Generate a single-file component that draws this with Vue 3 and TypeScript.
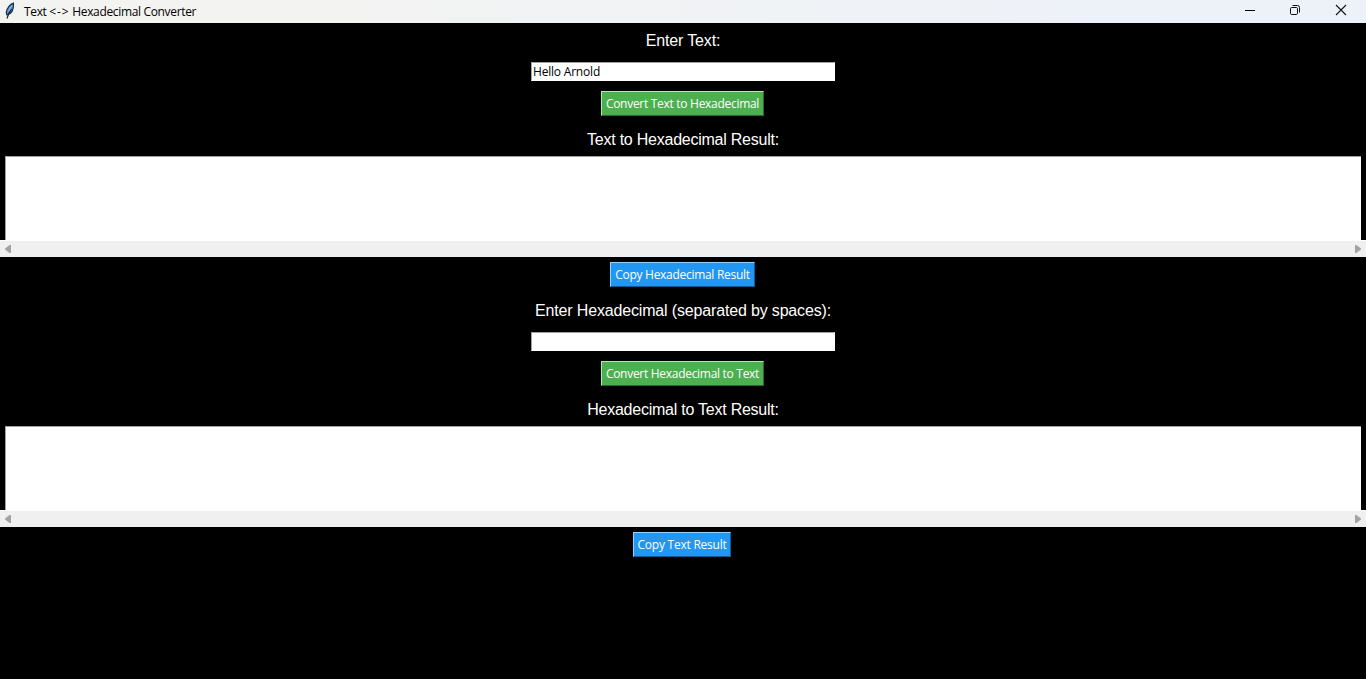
<script setup lang="ts">
import { reactive } from 'vue'

interface Converter {
  id: string
  prompt: string
  value: string
  action: string
  heading: string
  result: string
  copy: string
  run: (input: string) => string
}

const toHex = (input: string): string =>
  Array.from(new TextEncoder().encode(input), (b) => b.toString(16).padStart(2, '0')).join(' ')

const fromHex = (input: string): string => {
  const bytes = input.trim().split(/\s+/).filter(Boolean).map((h) => parseInt(h, 16))
  return new TextDecoder().decode(new Uint8Array(bytes))
}

const converters = reactive<Converter[]>([
  {
    id: 'encode',
    prompt: 'Enter Text:',
    value: 'Hello Arnold',
    action: 'Convert Text to Hexadecimal',
    heading: 'Text to Hexadecimal Result:',
    result: '',
    copy: 'Copy Hexadecimal Result',
    run: toHex,
  },
  {
    id: 'decode',
    prompt: 'Enter Hexadecimal (separated by spaces):',
    value: '',
    action: 'Convert Hexadecimal to Text',
    heading: 'Hexadecimal to Text Result:',
    result: '',
    copy: 'Copy Text Result',
    run: fromHex,
  },
])

const copyResult = (text: string) => navigator.clipboard?.writeText(text)
</script>

<template>
  <div class="window">
    <header class="titlebar">
      <svg class="feather" width="12" height="18" viewBox="0 0 12 18">
        <path d="M9.5 1.2C6 2.2 2.8 6 2.2 10.5L3 13C7 12 9.8 8 9.5 1.2Z" fill="#4f93e6" stroke="#222c38" stroke-width="1.2" />
        <path d="M7.8 3.5L4.6 9.5" stroke="#7db6f7" stroke-width="1.4" />
        <path d="M7.6 7L5 11L3 16.5" stroke="#15191f" stroke-width="1.1" fill="none" />
      </svg>
      <span class="title">Text <span class="arrows">&lt;-&gt;</span> Hexadecimal Converter</span>
      <div class="controls">
        <svg width="46" height="22" viewBox="0 0 46 22"><path d="M17 10.5H27" stroke="#000" /></svg>
        <svg width="46" height="22" viewBox="0 0 46 22" fill="none" stroke="#111">
          <rect x="16.5" y="7.5" width="7" height="7" rx="1.2" />
          <path d="M18.5 5.5H23.5Q25.5 5.5 25.5 7.5V12.5" />
        </svg>
        <svg width="46" height="22" viewBox="0 0 46 22"><path d="M16 5L26 15M26 5L16 15" stroke="#111" stroke-width="1.1" /></svg>
      </div>
    </header>

    <main>
      <section v-for="c in converters" :key="c.id" class="converter" :class="c.id">
        <label class="label prompt" :for="c.id">{{ c.prompt }}</label>
        <input :id="c.id" v-model="c.value" class="entry" type="text" spellcheck="false" />
        <button class="button convert" @click="c.result = c.run(c.value)">{{ c.action }}</button>
        <div class="label heading">{{ c.heading }}</div>
        <div class="output">{{ c.result }}</div>
        <div class="scrollbar">
          <svg width="6" height="8" viewBox="0 0 6 8"><path d="M0 3.4L4.6 0H6V8H4.6L0 4.6Z" fill="#a3a3a3" /></svg>
          <svg width="6" height="8" viewBox="0 0 6 8"><path d="M6 3.4L1.4 0H0V8H1.4L6 4.6Z" fill="#a3a3a3" /></svg>
        </div>
        <button class="button copy" @click="copyResult(c.result)">{{ c.copy }}</button>
      </section>
    </main>
  </div>
</template>

<style>
html,
body {
  background: #000;
  overflow: hidden;
}
</style>

<style scoped>
.window {
  height: 679px;
  background: #000;
  font: 12px/16px "Open Sans", "Noto Sans", sans-serif;
}
.titlebar {
  display: flex;
  align-items: flex-start;
  height: 23px;
  background: linear-gradient(90deg, #f3f3f1 0%, #f3f3f2 25%, #edf2f9 85%, #edf2f9 100%);
}
.feather {
  margin: 2px 0 0 4px;
}
.title {
  margin: 4px 0 0 8px;
  color: #000;
  letter-spacing: -0.34px;
  white-space: nowrap;
}
.arrows {
  letter-spacing: 0.85px;
}
.controls {
  display: flex;
  margin-left: auto;
}
.controls svg {
  display: block;
}
.converter {
  display: flex;
  flex-direction: column;
  align-items: center;
  height: 270px;
}
.label {
  height: 18px;
  color: #fff;
  font: 16px/18px "Liberation Sans", Arial, sans-serif;
  white-space: nowrap;
}
.prompt {
  margin-top: 9px;
  letter-spacing: -0.16px;
}
.heading {
  margin-top: 15px;
  letter-spacing: -0.24px;
}
.entry {
  box-sizing: border-box;
  width: 304px;
  height: 19px;
  margin: 12px 0 0;
  padding: 0 1px;
  border: 1px solid #fff;
  border-top-color: #a0a0a0;
  border-left-color: #a0a0a0;
  border-radius: 0;
  outline: 0;
  background: #fff;
  color: #000;
  font: inherit;
  letter-spacing: -0.2px;
}
.button {
  flex: none;
  box-sizing: border-box;
  height: 25px;
  padding: 0;
  border: 1px solid;
  border-radius: 0;
  color: #fff;
  font: inherit;
  letter-spacing: -0.29px;
  white-space: nowrap;
}
.convert {
  width: 163px;
  margin: 10px 1px 0 0;
  background: #4caf50;
  border-color: #a8f0aa #2b672d #2b672d #a8f0aa;
}
.output {
  align-self: stretch;
  box-sizing: border-box;
  height: 84px;
  margin: 7px 5px 0;
  padding: 1px;
  border-top: 1px solid #a0a0a0;
  border-left: 1px solid #a0a0a0;
  background: #fff;
  overflow: hidden;
  white-space: pre;
}
.scrollbar {
  align-self: stretch;
  box-sizing: border-box;
  display: flex;
  justify-content: space-between;
  align-items: center;
  height: 17px;
  padding: 0 5px;
  border-top: 1px solid #fff;
  background: #f0f0f0;
}
.copy {
  width: 145px;
  margin: 5px 1px 0 0;
  background: #2196f3;
  border-color: #90d5ff #135a92 #135a92 #90d5ff;
}
.decode .copy {
  width: 98px;
  margin-right: 2px;
  letter-spacing: -0.24px;
}
</style>
